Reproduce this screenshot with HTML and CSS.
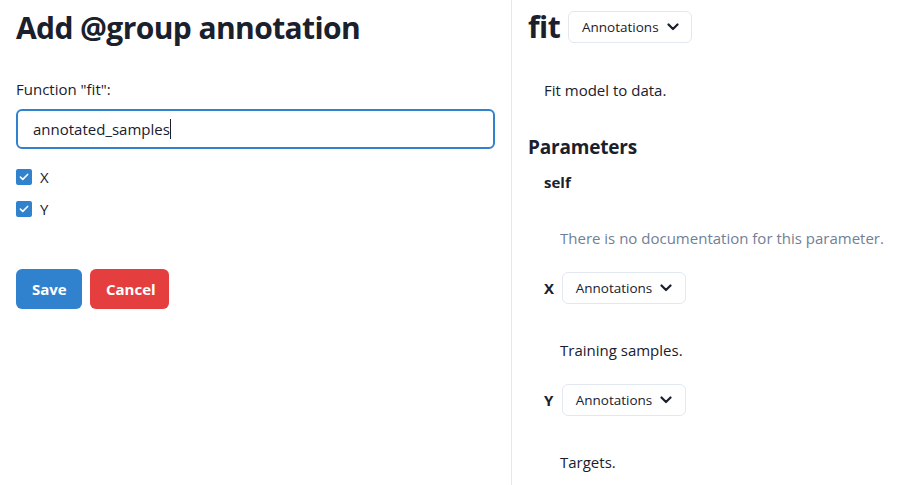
FILE: index.html
```html
<!DOCTYPE html>
<html>
<head>
<meta charset="utf-8">
<link rel="stylesheet" href="styles.css">
</head>
<body>
<div class="app">
  <section class="left">
    <h2 class="title">Add @group annotation</h2>
    <label class="label">Function "fit":</label>
    <div class="input">annotated_samples<span class="caret"></span></div>
    <div class="checks">
      <div class="check"><span class="box"><svg viewBox="0 0 12 10" width="10" height="8"><polyline points="1.5,5.2 4.5,8 10.5,1.8" fill="none" stroke="#fff" stroke-width="2" stroke-linecap="round" stroke-linejoin="round"/></svg></span><span>X</span></div>
      <div class="check"><span class="box"><svg viewBox="0 0 12 10" width="10" height="8"><polyline points="1.5,5.2 4.5,8 10.5,1.8" fill="none" stroke="#fff" stroke-width="2" stroke-linecap="round" stroke-linejoin="round"/></svg></span><span>Y</span></div>
    </div>
    <div class="actions">
      <button class="btn save">Save</button>
      <button class="btn cancel">Cancel</button>
    </div>
  </section>
  <section class="right">
    <div class="head">
      <h2 class="fn">fit</h2>
      <button class="menu">Annotations <svg class="chev" viewBox="0 0 12 8" width="12" height="8"><polyline points="1.5,1.5 6,6 10.5,1.5" fill="none" stroke="#1a202c" stroke-width="2.2" stroke-linecap="round" stroke-linejoin="round"/></svg></button>
    </div>
    <p class="desc">Fit model to data.</p>
    <h3 class="params">Parameters</h3>
    <div class="param self">self</div>
    <p class="pdoc muted">There is no documentation for this parameter.</p>
    <div class="param"><span class="pname">X</span><button class="menu">Annotations <svg class="chev" viewBox="0 0 12 8" width="12" height="8"><polyline points="1.5,1.5 6,6 10.5,1.5" fill="none" stroke="#1a202c" stroke-width="2.2" stroke-linecap="round" stroke-linejoin="round"/></svg></button></div>
    <p class="pdoc">Training samples.</p>
    <div class="param"><span class="pname">Y</span><button class="menu">Annotations <svg class="chev" viewBox="0 0 12 8" width="12" height="8"><polyline points="1.5,1.5 6,6 10.5,1.5" fill="none" stroke="#1a202c" stroke-width="2.2" stroke-linecap="round" stroke-linejoin="round"/></svg></button></div>
    <p class="pdoc">Targets.</p>
  </section>
</div>
</body>
</html>
```
FILE: styles.css
```css
* { box-sizing: border-box; }
html, body { margin: 0; padding: 0; background: #fff; }
body {
  font-family: "Open Sans", "Noto Sans", sans-serif;
  color: #1a202c;
  font-size: 16px;
  line-height: 24px;
  height: 485px;
  overflow: hidden;
}
.app { display: flex; height: 485px; }
.left {
  width: 512px;
  border-right: 1px solid #e2e8f0;
  padding: 8px 16px 0 16px;
  display: flex;
  flex-direction: column;
}
.title {
  margin: 0;
  font-size: 30px;
  line-height: 40px;
  font-weight: 700;
  letter-spacing: -0.6px;
}
.label {
  margin-top: 29px;
  display: block;
  font-size: 15px;
  line-height: 24px;
}
.input {
  margin-top: 8px;
  height: 40px;
  width: 479px;
  border: 2px solid #3182ce;
  border-radius: 6px;
  padding: 0 15px;
  font-size: 15px;
  line-height: 36px;
  display: flex;
  align-items: center;
}
.caret { display: inline-block; width: 1px; height: 20px; background: #1a202c; }
.checks { margin-top: 16px; display: flex; flex-direction: column; gap: 8px; }
.check { display: flex; align-items: center; gap: 8px; font-size: 15px; line-height: 24px; }
.box {
  width: 16px; height: 16px; border-radius: 2px; background: #3182ce;
  display: flex; align-items: center; justify-content: center;
}
.actions { margin-top: 48px; display: flex; gap: 8px; }
.btn {
  height: 40px; border: none; border-radius: 6px; color: #fff;
  font-family: inherit; font-weight: 700; font-size: 15px; padding: 0 16px;
}
.save { background: #3182ce; width: 66px; }
.cancel { background: #e53e3e; width: 79px; }

.right { flex: 1; padding: 11px 16px 0 16px; display: flex; flex-direction: column; }
.head { display: flex; align-items: center; gap: 8px; height: 32px; }
.fn { margin: 0; font-size: 30px; line-height: 32px; font-weight: 700; letter-spacing: -0.5px; }
.menu {
  height: 32px; border: 1px solid #e2e8f0; border-radius: 6px; background: #fff;
  font-family: inherit; font-size: 13.5px; color: #1a202c; padding: 0 12px;
  display: inline-flex; align-items: center; gap: 8px; width: 124px; justify-content: center;
}
.chev { display: block; }
.desc { margin: 35px 0 0 16px; font-size: 15px; line-height: 24px; }
.params { margin: 31px 0 0 0; font-size: 19px; line-height: 28px; font-weight: 700; letter-spacing: -0.2px; }
.param { margin-left: 16px; display: flex; align-items: center; gap: 8px; font-weight: 700; font-size: 15px; height: 32px; }
.param.self { margin-top: 9px; }
.pname { width: 10px; }
.pdoc { margin: 34px 0 22px 32px; font-size: 15px; line-height: 24px; }
.pdoc.muted { color: #718096; margin-top: 32px; }
```
